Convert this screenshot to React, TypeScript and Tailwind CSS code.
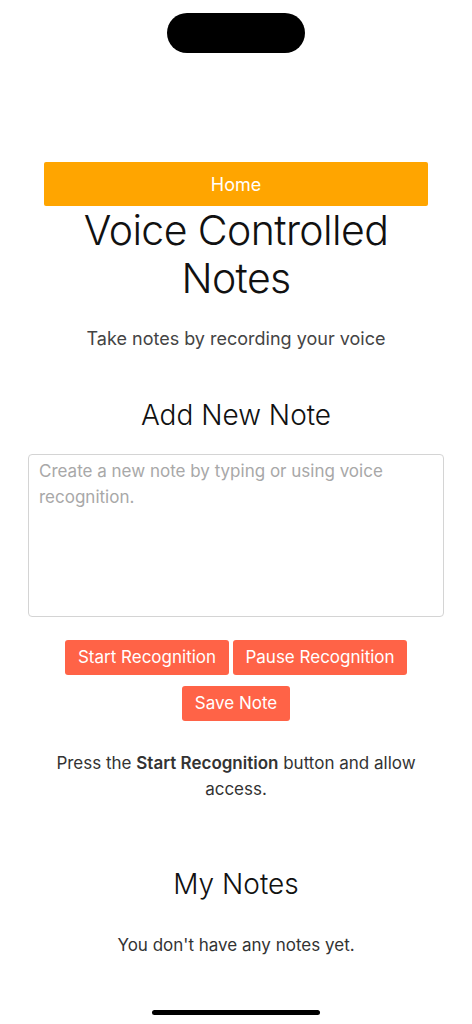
import { useState } from "react";

export default function App() {
  const [note, setNote] = useState("");

  return (
    <div className="relative min-h-screen bg-white font-['Inter',sans-serif] text-[#111]">
      {/* Notch */}
      <div className="flex justify-center pt-[13px]">
        <div className="h-[40px] w-[138px] rounded-full bg-black" />
      </div>

      <div className="flex flex-col items-center pt-[109px]">
        {/* Nav */}
        <div className="flex h-[44px] w-[384px] items-center justify-center rounded-[2px] bg-[#FFA500] text-[18px] text-white">
          Home
        </div>

        <h1 className="text-center text-[41px] font-light leading-[48px] tracking-[-0.6px]">
          Voice Controlled
          <br />
          Notes
        </h1>

        <p className="mt-[24px] text-[18px] leading-[26px] text-[#444]">
          Take notes by recording your voice
        </p>

        <h2 className="mt-[45px] text-[28px] font-light leading-[36px]">
          Add New Note
        </h2>

        {/* Note input */}
        <textarea
          value={note}
          onChange={(e) => setNote(e.target.value)}
          placeholder="Create a new note by typing or using voice recognition."
          className="mt-[21px] h-[163px] w-[416px] resize-none rounded-[4px] border border-[#d4d4d4] px-[10px] py-[3px] text-[17px] leading-[26px] text-[#333] outline-none placeholder:text-[#a8a8a8]"
        />

        {/* Buttons */}
        <div className="mt-[23px] flex gap-[4px]">
          <button className="h-[35px] w-[164px] rounded-[3px] bg-[#FF6347] text-[17px] text-white">
            Start Recognition
          </button>
          <button className="h-[35px] w-[174px] rounded-[3px] bg-[#FF6347] text-[17px] text-white">
            Pause Recognition
          </button>
        </div>
        <button className="mt-[11px] h-[35px] w-[108px] rounded-[3px] bg-[#FF6347] text-[17px] text-white">
          Save Note
        </button>

        <p className="mt-[29px] w-[380px] text-center text-[17px] leading-[26px] text-[#333]">
          Press the <strong className="font-semibold">Start Recognition</strong> button and allow access.
        </p>

        <h2 className="mt-[64px] text-[28px] font-light leading-[36px]">
          My Notes
        </h2>

        <p className="mt-[30px] text-[17px] leading-[26px] text-[#333]">
          You don't have any notes yet.
        </p>
      </div>

      {/* Home indicator */}
      <div className="absolute bottom-[9px] left-1/2 h-[5px] w-[168px] -translate-x-1/2 rounded-full bg-black" />
    </div>
  );
}
